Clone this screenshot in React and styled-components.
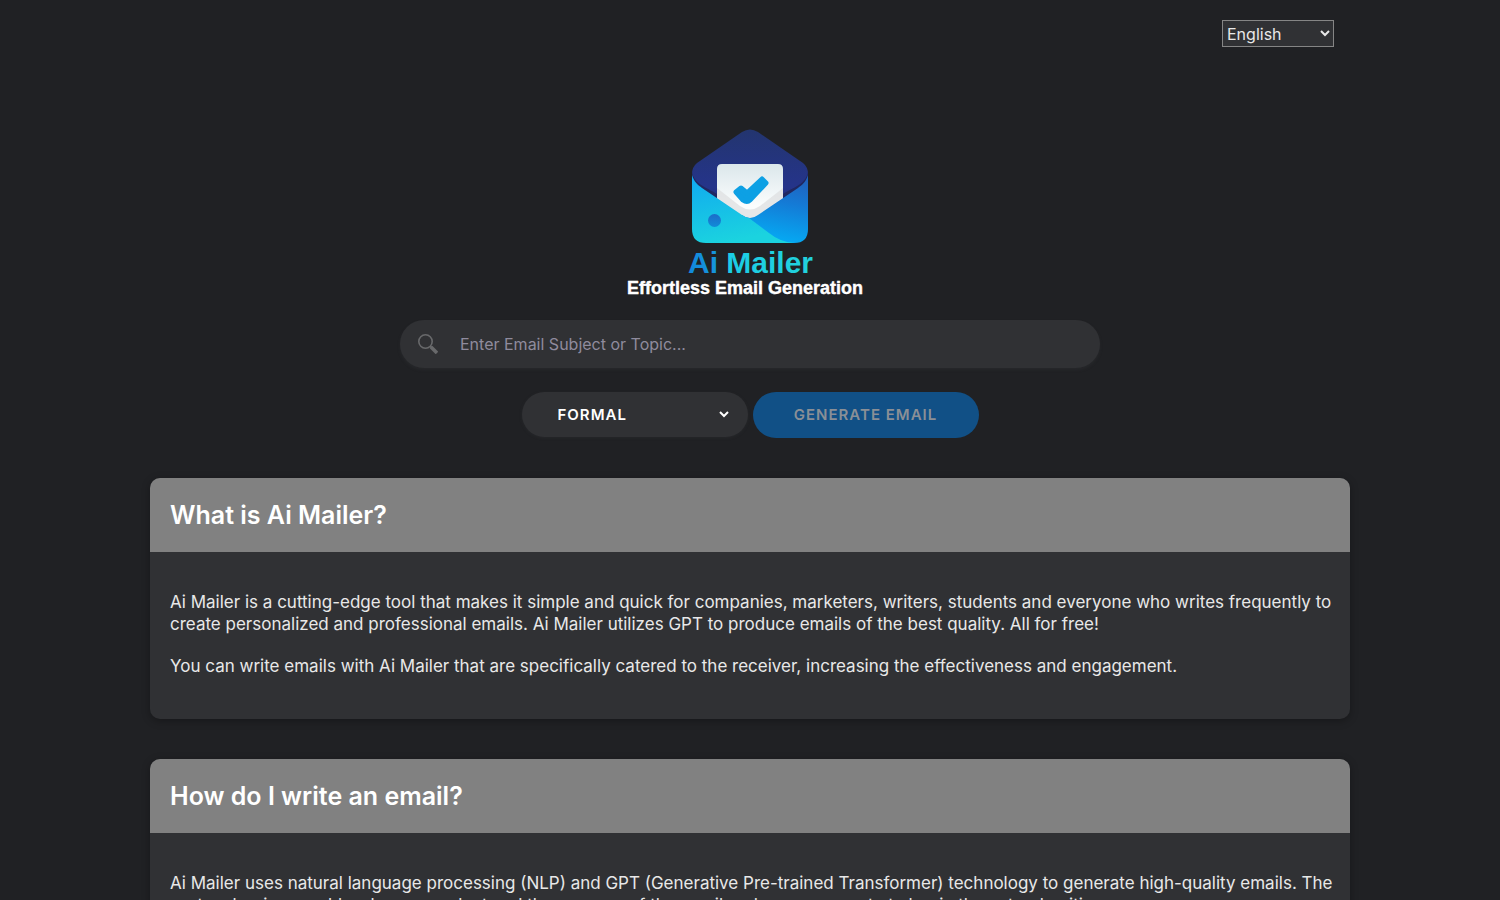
import React, { useState } from 'react';
import styled, { createGlobalStyle } from 'styled-components';

const GlobalStyle = createGlobalStyle`
	* {
		box-sizing: border-box;
	}
	html {
		background: #202124;
		scrollbar-width: none;
	}
	body {
		margin: 0;
		color: #e8e8e8;
		font-family: Inter, 'Open Sans', sans-serif;
		font-size: 16px;
		line-height: 22px;
	}
	input, select, button {
		font: inherit;
		color: inherit;
	}
`;

const Page = styled.div`
	max-width: 1200px;
	margin: 0 auto;
	padding-top: 20px;
`;
const TopBar = styled.header`
	display: flex;
	justify-content: flex-end;
	padding-right: 16px;
`;
const LanguageSelect = styled.select`
	width: 112px;
	height: 27px;
	background: #303134;
	border: 1px solid #858585;
`;
const Hero = styled.main`
	display: flex;
	flex-direction: column;
	align-items: center;
	padding-top: 80px;
`;
const Logo = styled.svg`
	display: block;
	width: 250px;
	height: 173px;
	text {
		font-family: 'Liberation Sans', Arial, sans-serif;
		font-weight: 700;
		stroke-linejoin: round;
	}
`;
const Form = styled.form`
	display: flex;
	flex-direction: column;
	align-items: center;
	gap: 24px;
	width: 100%;
	max-width: 700px;
	margin-top: 20px;
`;
const SearchBox = styled.label`
	display: flex;
	align-items: center;
	gap: 20px;
	width: 100%;
	height: 48px;
	padding: 0 18px;
	background: #303134;
	border-radius: 24px;
	box-shadow: 0 2px 3px rgba(48, 49, 52, 0.4);
	svg {
		flex: none;
	}
`;
const SearchInput = styled.input`
	flex: 1;
	min-width: 0;
	padding: 0 2px;
	background: none;
	border: 0;
	outline: 0;
	&::placeholder {
		color: #8f8b9d;
		opacity: 1;
	}
`;
const Actions = styled.div`
	display: flex;
	gap: 5px;
`;
const ToneSelect = styled.select`
	width: 226px;
	height: 45px;
	padding: 0 0 0 32px;
	background: #303134;
	border: 0 solid transparent;
	border-right-width: 16px;
	border-radius: 24px;
	box-shadow: 0 1px 3px rgba(48, 49, 52, 0.4);
	color: #fff;
	font-size: 15px;
	font-weight: 600;
	letter-spacing: 1px;
`;
const GenerateButton = styled.button`
	width: 226px;
	height: 46px;
	background: #115086;
	border: 0;
	border-radius: 24px;
	color: #8a8f96;
	font-size: 15px;
	font-weight: 600;
	letter-spacing: 1px;
`;
const Card = styled.section`
	margin-top: 40px;
	overflow: hidden;
	background: #303134;
	border-radius: 10px;
	box-shadow: 0 2px 8px rgba(0, 0, 0, 0.3);
`;
const CardTitle = styled.h2`
	margin: 0;
	padding: 20px;
	background: #818181;
	color: #fff;
	font-size: 25px;
	font-weight: 600;
	line-height: 34px;
`;
const CardBody = styled.div`
	padding: 39px 16px 42px 20px;
	font-size: 17px;
	p {
		margin: 0;
	}
	p + p {
		margin-top: 20px;
	}
`;

const MailerLogo = () => (
	<Logo viewBox='625 127 250 173' role='img' aria-label='Ai Mailer, Effortless Email Generation'>
		<defs>
			<linearGradient id='flap' x1='0' y1='0' x2='0' y2='1'>
				<stop offset='0' stopColor='#23356f' />
				<stop offset='0.6' stopColor='#25348a' />
				<stop offset='1' stopColor='#202963' />
			</linearGradient>
			<linearGradient id='front' x1='0' y1='0' x2='0.3' y2='1'>
				<stop offset='0' stopColor='#10a8f0' />
				<stop offset='1' stopColor='#1bd3df' />
			</linearGradient>
			<linearGradient id='side' x1='0.7' y1='0' x2='0.5' y2='1'>
				<stop offset='0' stopColor='#2160bd' />
				<stop offset='0.4' stopColor='#147bd6' />
				<stop offset='1' stopColor='#04adf5' />
			</linearGradient>
			<linearGradient id='paper' x1='0' y1='0' x2='0' y2='1'>
				<stop offset='0' stopColor='#dbe7eb' />
				<stop offset='0.7' stopColor='#fbfdfd' />
			</linearGradient>
			<linearGradient id='dot' x1='0' y1='0' x2='0' y2='1'>
				<stop offset='0' stopColor='#1c6cc9' />
				<stop offset='1' stopColor='#118bd8' />
			</linearGradient>
			<linearGradient id='word' gradientUnits='userSpaceOnUse' x1='688' y1='0' x2='812' y2='0'>
				<stop offset='0' stopColor='#1188dc' />
				<stop offset='0.22' stopColor='#1695dd' />
				<stop offset='0.3' stopColor='#1bcde6' />
				<stop offset='1' stopColor='#22d2dc' />
			</linearGradient>
			<clipPath id='body'>
				<path d='M692 172 L808 172 V229 Q808 243 794 243 H706 Q692 243 692 229 Z' />
			</clipPath>
		</defs>
		<path d='M742 132 Q750 127 758 132 L803 163 Q808 167 808 174 V198 L750 225 L692 198 V174 Q692 167 697 163 Z' fill='url(#flap)' />
		<path d='M692 172 C694 184 706 187 717 194 V201 L692 185 Z M808 172 C806 184 794 187 783 194 V201 L808 185 Z' fill='#202861' />
		<path d='M717 169 Q717 164 722 164 H778 Q783 164 783 169 V205 L750 224 L717 205 Z' fill='url(#paper)' />
		<path d='M717 188 L740 206 Q750 213 760 206 L783 188 V200 L756 218 Q750 221 744 218 L717 200 Z' fill='#dedfe0' opacity='0.75' />
		<g clipPath='url(#body)'>
			<path d='M808 175 C806 182 802 185 798 188 L758 215 Q750 221 742 215 L740 243 H808 Z' fill='url(#side)' />
			<path d='M692 175 C694 182 698 185 702 188 L742 215 Q746 218 749 218 L769 233 Q780 242 794 243 H692 Z' fill='url(#front)' />
		</g>
		<circle cx='714.5' cy='220.5' r='6.5' fill='url(#dot)' />
		<path
			d='M741 188 L747 193 L762 179 L766 183 L750 200 Q747 203 743 200 L736 192 Z'
			fill='#0da0e4'
			stroke='#0da0e4'
			strokeWidth='5'
			strokeLinejoin='round'
		/>
		<text x='688' y='273' fontSize='30' fill='url(#word)'>Ai Mailer</text>
		<text x='627' y='294' fontSize='18' fill='#fff' stroke='#fff' strokeWidth='0.4'>Effortless Email Generation</text>
	</Logo>
);

const SearchIcon = () => (
	<svg width='20' height='20' viewBox='0 0 20 20' fill='none' stroke='#68696b' aria-hidden='true'>
		<circle cx='7.5' cy='7.5' r='6.7' strokeWidth='1.6' />
		<path d='M12 12 L14 14' strokeWidth='2' />
		<path d='M13 13 L19 19' strokeWidth='3.5' />
	</svg>
);

const sections = [
	{
		title: 'What is Ai Mailer?',
		text: [
			'Ai Mailer is a cutting-edge tool that makes it simple and quick for companies, marketers, writers, students and everyone who writes frequently to create personalized and professional emails. Ai Mailer utilizes GPT to produce emails of the best quality. All for free!',
			'You can write emails with Ai Mailer that are specifically catered to the receiver, increasing the effectiveness and engagement.',
		],
	},
	{
		title: 'How do I write an email?',
		text: [
			'Ai Mailer uses natural language processing (NLP) and GPT (Generative Pre-trained Transformer) technology to generate high-quality emails. The system begins roughly when you select and the purpose of the email and press generate to begin the natural writing.',
		],
	},
];

const App = () => {
	const [topic, setTopic] = useState('');
	return (
		<>
			<GlobalStyle />
			<Page>
				<TopBar>
					<LanguageSelect aria-label='Language'>
						<option>English</option>
					</LanguageSelect>
				</TopBar>
				<Hero>
					<MailerLogo />
					<Form onSubmit={(e) => e.preventDefault()}>
						<SearchBox>
							<SearchIcon />
							<SearchInput
								aria-label='Email subject'
								placeholder='Enter Email Subject or Topic...'
								value={topic}
								onChange={(e) => setTopic(e.target.value)}
							/>
						</SearchBox>
						<Actions>
							<ToneSelect aria-label='Tone'>
								<option>FORMAL</option>
							</ToneSelect>
							<GenerateButton type='submit' disabled={!topic}>
								GENERATE EMAIL
							</GenerateButton>
						</Actions>
					</Form>
				</Hero>
				{sections.map((section) => (
					<Card key={section.title}>
						<CardTitle>{section.title}</CardTitle>
						<CardBody>
							{section.text.map((text, index) => (
								<p key={index}>{text}</p>
							))}
						</CardBody>
					</Card>
				))}
			</Page>
		</>
	);
};
export default App;
